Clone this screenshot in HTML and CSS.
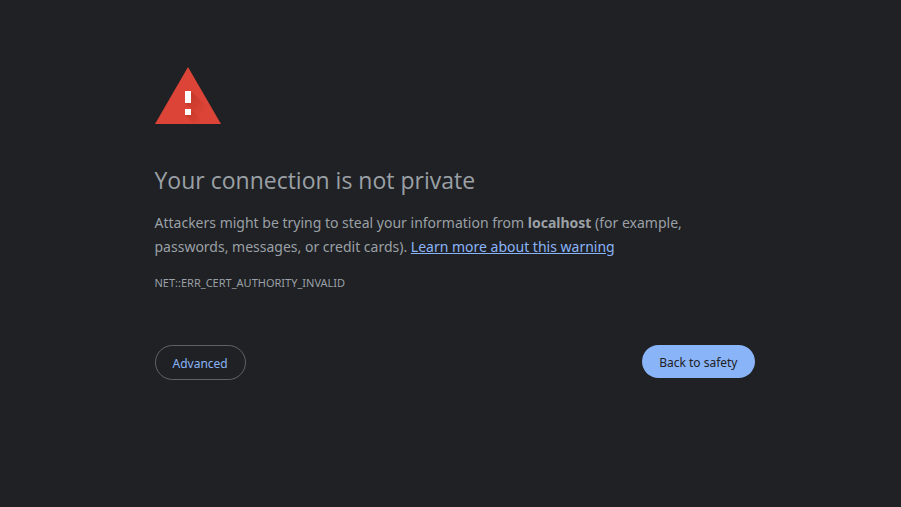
FILE: index.html
```html
<!DOCTYPE html>
<html lang="en">
<head>
<meta charset="utf-8">
<meta name="viewport" content="width=device-width, initial-scale=1">
<title>Privacy error</title>
<link rel="stylesheet" href="styles.css">
</head>
<body>
<main class="interstitial">
  <svg class="icon" viewBox="0 0 72 72" aria-hidden="true">
    <defs>
      <linearGradient id="shade" x1="33" y1="36" x2="48" y2="51" gradientUnits="userSpaceOnUse">
        <stop offset="0" stop-color="#a52714" stop-opacity=".4"/>
        <stop offset="1" stop-color="#a52714" stop-opacity="0"/>
      </linearGradient>
      <linearGradient id="shade-dot" x1="33" y1="51" x2="44" y2="62" gradientUnits="userSpaceOnUse">
        <stop offset="0" stop-color="#a52714" stop-opacity=".4"/>
        <stop offset="1" stop-color="#a52714" stop-opacity="0"/>
      </linearGradient>
    </defs>
    <path fill="#db4437" d="M0 63h66L33 6z"/>
    <path fill="url(#shade)" d="M36 30l16 16v16L30 42z"/>
    <path fill="url(#shade-dot)" d="M36 48l15 15H39l-9-9z"/>
    <path fill="#fff" d="M30 48h6v6h-6zM30 30h6v12h-6z"/>
  </svg>
  <h1 class="title">Your connection is not private</h1>
  <p class="message">Attackers might be trying to steal your information from <strong>localhost</strong> (for example, passwords, messages, or credit cards). <a class="link" href="#">Learn more about this warning</a></p>
  <p class="code">NET::ERR_CERT_AUTHORITY_INVALID</p>
  <div class="actions">
    <button class="button secondary" type="button">Advanced</button>
    <button class="button primary" type="button">Back to safety</button>
  </div>
</main>
</body>
</html>
```
FILE: styles.css
```css
body {
  margin: 0;
  padding-left: 8px;
  background: #202124;
  color: #9aa0a6;
  font: 14px/24px "Noto Sans", "Open Sans", sans-serif;
}

.interstitial {
  box-sizing: border-box;
  max-width: 600px;
  margin: 0 auto;
  padding-top: 61px;
}

.icon {
  display: block;
  width: 72px;
  height: 72px;
  margin-bottom: 32px;
}

.title {
  margin: 0 0 16px;
  font-family: "Open Sans", "Noto Sans", sans-serif;
  font-size: 23px;
  line-height: 30px;
  font-weight: 400;
}

.message {
  max-width: 580px;
  margin: 0;
}

.link {
  color: #8ab4f8;
}

.code {
  margin: 12px 0 0;
  font-size: 11px;
}

.actions {
  display: flex;
  justify-content: space-between;
  align-items: flex-start;
  margin-top: 50px;
}

.button {
  padding: 9px 17px 7px;
  border: 0;
  border-radius: 20px;
  font: 12px/17px "Noto Sans", "Open Sans", sans-serif;
  cursor: pointer;
}

.secondary {
  border: 1px solid #5f6368;
  background: transparent;
  color: #8ab4f8;
}

.primary {
  background: #8ab4f8;
  color: #202124;
}
```
